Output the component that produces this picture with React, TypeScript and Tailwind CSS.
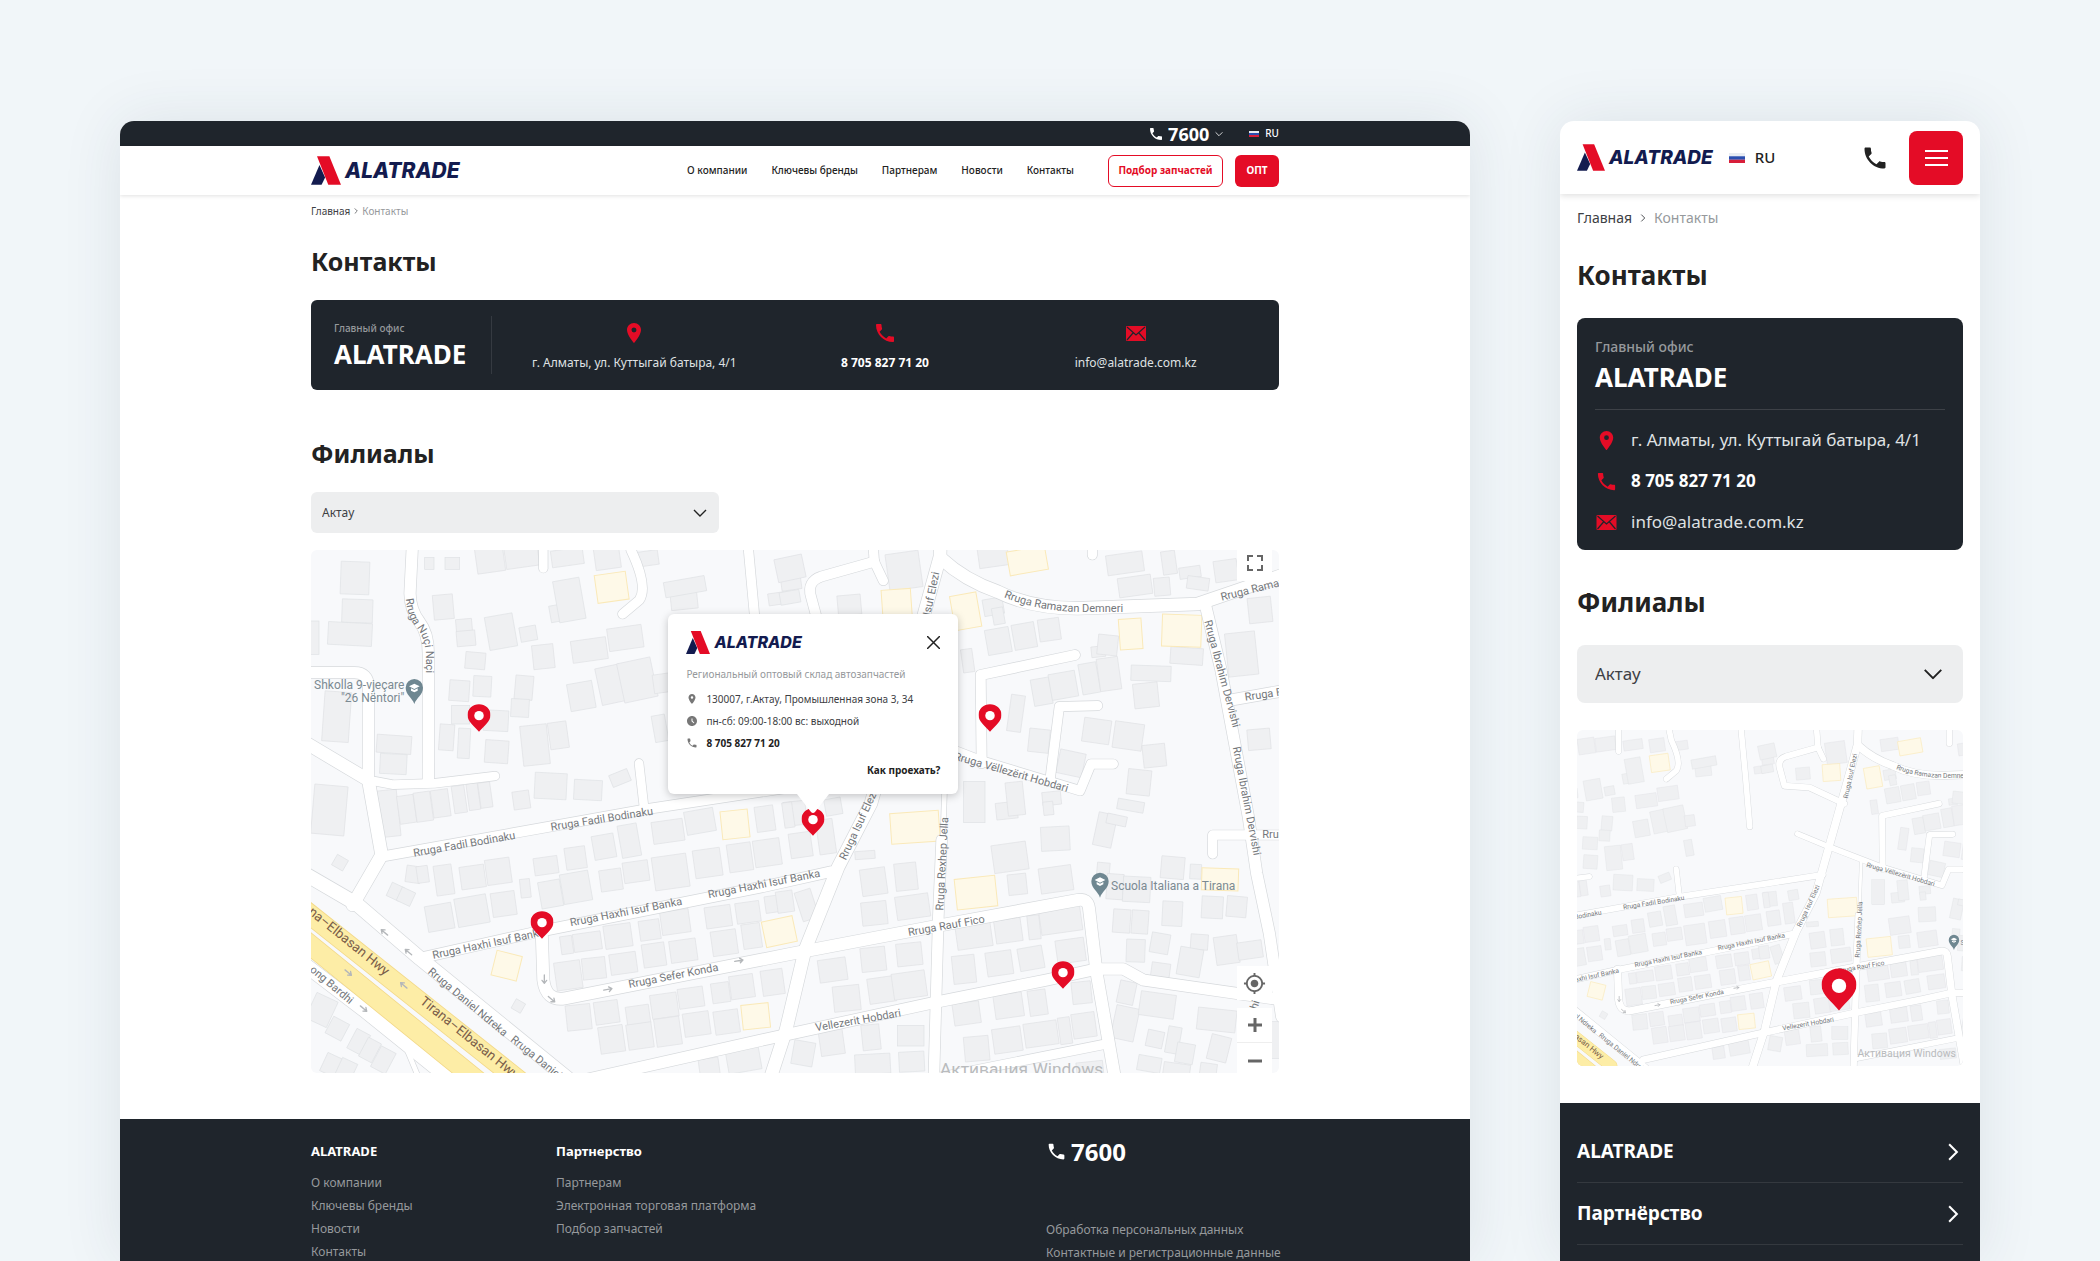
import React, { useId } from 'react';
import { MdAccessTimeFilled, MdGpsFixed, MdLocationOn, MdPhone } from 'react-icons/md';

type Shape = [number, number, number, number, number?];

// Buildings are stored per map tile: center x, center y, width, height, rotation
const TILES: { origin: string; gray: Shape[]; yellow: Shape[] }[] = [
  {
    origin: 'translate(-63 -390)',
    gray: [
      [195, 474, 86, 98, 2], [202, 573, 92, 70, 2], [180, 642, 132, 68, 3], [72, 653, 30, 100], [140, 890, 80, 150, 4],
      [418, 430, 28, 36], [487, 430, 44, 36], [600, 418, 84, 78, -8], [695, 408, 100, 68, -8], [832, 412, 96, 50, -8],
      [952, 414, 76, 66, -8], [1073, 415, 64, 44, -8], [460, 561, 60, 74, -5], [522, 616, 48, 38, -5], [528, 655, 56, 46, -5],
      [633, 635, 84, 100, -10], [715, 641, 50, 44, -10], [760, 710, 64, 72, -6], [556, 722, 60, 50, 5], [800, 580, 40, 50, -10],
      [838, 540, 80, 125, -10], [1182, 540, 80, 56, -6], [1185, 500, 124, 46, -10], [1500, 465, 60, 90, -8], [1470, 535, 70, 36, -8],
      [898, 690, 106, 66, -8], [1006, 654, 104, 68, -8], [962, 794, 74, 112, -12], [1042, 780, 102, 120, -12], [874, 828, 76, 82, -10],
      [1115, 790, 50, 56, -8], [508, 812, 60, 62, 4], [577, 799, 54, 62, 3], [702, 803, 54, 72, 5], [690, 864, 54, 54, 3],
      [512, 884, 54, 56], [618, 902, 74, 62, 3], [470, 952, 44, 78, 4], [522, 970, 36, 90, 3], [620, 995, 70, 68, 4],
      [735, 975, 80, 120, -6], [805, 946, 56, 80, -8], [312, 973, 104, 54, 4], [1110, 925, 40, 80, -10],
    ],
    yellow: [[965, 502, 94, 84, -8]],
  },
  {
    origin: 'translate(1407 -30)',
    gray: [
      [30, 85, 84, 70, -12], [30, 172, 60, 38, -10], [208, 195, 70, 60, -5], [372, 92, 100, 110, -8], [640, 50, 90, 60, -8],
      [640, 200, 60, 50, -10], [655, 228, 34, 50, -10], [1035, 70, 110, 60, -8], [1167, 68, 42, 70, -8], [1230, 97, 64, 34, -8],
      [1254, 130, 66, 38, 8], [1065, 138, 100, 58, -8], [1146, 140, 48, 54, -5], [1338, 92, 70, 64, -8], [1440, 210, 70, 76, -6],
      [1385, 342, 90, 130, -6], [655, 303, 72, 76, -10], [733, 288, 68, 76, -10], [808, 269, 64, 66, -8], [563, 362, 34, 70, -8],
      [955, 335, 42, 32, -6], [983, 315, 60, 60, 6], [1220, 348, 98, 50, 4], [1113, 400, 120, 46, 2], [1098, 466, 74, 74, -6],
      [785, 455, 56, 80, -10], [850, 436, 80, 78, -10], [928, 415, 54, 92, -10], [987, 402, 64, 98, -8], [708, 520, 42, 110, 8],
      [777, 602, 62, 70, 6], [873, 670, 78, 72, 12], [950, 573, 82, 72, 8], [1045, 588, 88, 80, 8], [1123, 647, 68, 68, -6],
      [1077, 727, 70, 76, 6], [1052, 797, 80, 32, 10], [583, 786, 64, 124], [680, 812, 64, 50, -6], [706, 776, 52, 100, -6],
      [815, 775, 56, 40, -6], [805, 805, 30, 40, -6], [826, 896, 86, 72, -3], [975, 870, 56, 100, 12], [1010, 840, 60, 30, 12],
      [1437, 598, 68, 62, -5], [62, 915, 66, 74, -8], [138, 890, 50, 104, -8], [45, 820, 66, 72, -6], [160, 800, 50, 50, -10],
      [255, 945, 60, 24, -4],
    ],
    yellow: [
      [350, 190, 88, 84, -4], [742, 62, 116, 72, -10], [557, 214, 80, 104, -10], [1052, 282, 68, 92, -4],
      [1205, 272, 118, 96, 2], [405, 862, 146, 92, -4],
    ],
  },
  {
    origin: 'translate(-63 570)',
    gray: [
      [118, 210, 100, 148, 5], [150, 368, 38, 36, 30], [310, 72, 80, 60, 3], [297, 220, 58, 140, -6], [350, 208, 50, 84, -8],
      [400, 200, 50, 88, -8], [452, 190, 52, 82, -8], [508, 178, 38, 82, -8], [550, 170, 34, 80, -8], [586, 165, 36, 76, -8],
      [694, 180, 50, 54, -8], [782, 138, 96, 78, 3], [894, 150, 84, 60, 3], [990, 114, 58, 38, -22], [370, 403, 44, 50, 8],
      [398, 403, 34, 50, -8], [462, 420, 54, 90, -8], [548, 411, 74, 68, -8], [625, 394, 74, 76, -8], [316, 455, 40, 44, 25],
      [348, 470, 44, 44, 25], [449, 532, 80, 78, -10], [546, 512, 96, 86, -10], [641, 492, 72, 72, -8], [706, 445, 30, 56, -6],
      [768, 377, 72, 52, -8], [857, 354, 62, 66, -8], [942, 320, 66, 72, -10], [1018, 302, 58, 98, -10], [782, 462, 66, 80, -10],
      [858, 442, 86, 90, -10], [963, 420, 66, 64, -8], [1038, 395, 76, 62, -8], [1134, 274, 94, 66, -8], [1230, 244, 88, 70, -10],
      [1425, 236, 56, 76, -8], [1495, 225, 30, 76, -8], [1142, 396, 104, 100, -8], [1253, 369, 82, 84, -8], [1350, 352, 72, 84, -8],
      [1432, 338, 80, 80, -8], [830, 615, 36, 54, -8], [892, 605, 84, 54, -8], [984, 588, 82, 70, -8], [1079, 570, 62, 60, -8],
      [1156, 546, 86, 70, -8], [1285, 530, 78, 64, -8], [1374, 517, 72, 62, -8], [1465, 490, 80, 50, -8], [835, 706, 78, 84, -8],
      [912, 685, 70, 64, -6], [1000, 670, 80, 62, -8], [1092, 645, 68, 70, -8], [1180, 632, 80, 66, -8], [1303, 608, 76, 74, -8],
      [1385, 588, 56, 74, -8], [685, 798, 32, 32, 30], [866, 832, 74, 76, -6], [950, 817, 72, 68, -8], [965, 898, 74, 80, -8],
      [1044, 825, 70, 56, -8], [1050, 888, 76, 76, -8], [1123, 797, 80, 72, -8], [1134, 875, 76, 84, -8], [1203, 773, 76, 60, -8],
      [1220, 852, 78, 70, -8], [1292, 758, 54, 60, -8], [1356, 740, 72, 70, -8], [1310, 846, 74, 70, -8], [1448, 727, 66, 76, -8],
      [95, 810, 70, 84, 25], [142, 866, 54, 56, 28], [206, 905, 46, 66, 28], [240, 930, 44, 64, 28], [280, 960, 50, 70, 28],
      [124, 975, 50, 60, 25], [168, 990, 50, 60, 25], [1258, 985, 60, 60, -8], [1360, 955, 100, 80, -10],
    ],
    yellow: [[1335, 253, 82, 84, -6], [1468, 575, 94, 78, -12], [650, 677, 78, 76, 14], [1397, 829, 82, 74, -6]],
  },
  {
    origin: 'translate(1407 870)',
    gray: [
      [15, 185, 50, 64, -8], [80, 195, 50, 90, -18], [281, 125, 76, 80, -8], [378, 110, 66, 82, -6], [283, 220, 76, 70, -6],
      [398, 200, 100, 70, -8], [690, 52, 104, 84, -8], [712, 133, 56, 62, -6], [828, 118, 98, 76, -8], [970, 88, 38, 40, 5],
      [1005, 140, 50, 76, 4], [1070, 148, 82, 76, 3], [1178, 83, 70, 66, 5], [1247, 95, 34, 44, 3], [1297, 202, 64, 66, 3],
      [1370, 200, 60, 62, 5], [1025, 243, 52, 70, 4], [1080, 246, 50, 70, 4], [1177, 221, 60, 74, 3], [1067, 332, 56, 68, 2],
      [1140, 310, 56, 60, 10], [1258, 306, 52, 46, 4], [1230, 366, 70, 84, 10], [1340, 330, 70, 84, -8], [1410, 330, 74, 52, -8],
      [1142, 390, 56, 42, 8], [582, 288, 106, 72, -8], [685, 272, 80, 70, -8], [762, 262, 36, 72, -6], [842, 240, 124, 76, -8],
      [552, 388, 68, 84, -6], [658, 370, 78, 72, -8], [753, 355, 74, 68, -10], [872, 332, 86, 70, -8], [158, 390, 84, 68, -8],
      [280, 358, 74, 72, -6], [388, 343, 76, 68, -6], [200, 475, 80, 76, -6], [305, 450, 80, 76, -8], [388, 435, 100, 78, -8],
      [560, 520, 80, 66, -8], [686, 497, 86, 72, -8], [773, 488, 54, 76, -8], [905, 458, 58, 66, -6], [590, 626, 74, 74, -5],
      [682, 600, 86, 74, -8], [783, 582, 100, 72, -8], [855, 572, 36, 80, -8], [912, 556, 70, 74, -8], [155, 605, 72, 80, -8],
      [273, 592, 54, 76, -6], [392, 587, 80, 62], [70, 640, 64, 72, 10], [278, 672, 106, 60, -3], [395, 665, 76, 60, -3],
      [1040, 458, 50, 68, 12], [1035, 550, 70, 100, 12], [1132, 495, 106, 72, 8], [1310, 540, 116, 66, 6], [1125, 597, 50, 50, 12],
      [1180, 600, 40, 80, 10], [1215, 640, 54, 60, 10], [1317, 625, 60, 76, 14], [1108, 672, 70, 46, 10], [1190, 690, 80, 40, 8],
      [1285, 690, 50, 40, 8], [930, 690, 80, 50, -6], [1487, 600, 30, 110],
    ],
    yellow: [[588, 158, 122, 92, -6], [1320, 118, 110, 66, 2]],
  },
];

const ROADS: [string, number][] = [
  ['M307 -70 L297 130 Q298 180 325 215 Q352 250 352 310 V690', 34],
  ['M-30 368 H130 Q172 368 172 410 V690', 34],
  ['M-30 570 L172 690 L212 915 L125 1065', 38],
  ['M172 690 L247 704 L370 700 L552 678', 26],
  ['M212 920 L1017 776 L1437 712 L1714 669', 30],
  ['M984 640 L1000 780', 26],
  ['M-30 965 L137 1062 L327 1225 L800 1610 L860 1660', 42],
  ['M-30 1235 L157 1378 L420 1590', 42],
  ['M280 1480 L330 1600', 14],
  ['M337 1222 L677 1146 L1357 1010 L1560 965', 32],
  ['M692 1140 L697 1290 Q705 1355 762 1345 L1437 1212 L1877 1128 L2300 1050 Q2330 1044 2334 1075 L2357 1270 L2425 1660', 36],
  ['M820 1590 L1367 1467 L1867 1358 L2207 1290 L2357 1257 H2437 L2497 1290 L2930 1352', 34],
  ['M1890 -70 L1887 20 L1840 190 L1680 760 L1582 950 L1482 1200 L1425 1440 L1360 1640', 38],
  ['M1890 25 Q1960 90 2060 125 Q2160 175 2300 175 L2660 162 L2930 70', 38],
  ['M2682 160 L2730 360 L2812 800 L2837 970 L2875 1150 L2912 1400', 34],
  ['M2760 450 L2930 420', 34],
  ['M2705 912 V855 H2930', 28],
  ['M1905 600 L1895 880', 14],
  ['M1892 870 L1882 1100 L1867 1640', 32],
  ['M2012 640 L2009 375 L2292 315', 30],
  ['M2217 690 L2245 470 L2360 467', 28],
  ['M1588 465 L1745 530', 26],
  ['M1745 530 L2010 632 L2307 722 L2340 642 H2407', 28],
  ['M1690 35 L1530 80 Q1487 95 1500 140 L1523 226 L1648 235 L1821 315', 30],
  ['M1682 -70 L1690 35 L1717 92', 28],
  ['M1306 -70 L1330 190 L1350 430', 28],
  ['M945 -70 L960 0 Q1012 110 985 150 L935 192', 28],
  ['M697 -70 V55', 26],
  ['M2344 -70 V15', 28],
  ['M1870 1585 L2395 1480', 28],
];

const HIGHWAYS = ['M-40 1064 L660 1620', 'M-40 1154 L620 1690'];

const STREETS: { text: string; at: [number, number]; turn: number; end?: boolean }[] = [
  { text: 'Rruga Fadil Bodinaku', at: [309, 920], turn: -10 },
  { text: 'Rruga Fadil Bodinaku', at: [721, 842], turn: -9 },
  { text: 'Rruga Haxhi Isuf Banka', at: [367, 1227], turn: -12 },
  { text: 'Rruga Haxhi Isuf Banka', at: [779, 1129], turn: -11 },
  { text: 'Rruga Haxhi Isuf Banka', at: [1193, 1045], turn: -11 },
  { text: 'Rruga Sefer Konda', at: [955, 1314], turn: -11 },
  { text: 'Rruga Daniel Ndreka', at: [349, 1268], turn: 40 },
  { text: 'Rruga Daniel Ndreka', at: [597, 1472], turn: 39 },
  { text: 'ong Bardhi', at: [-5, 1262], turn: 40 },
  { text: 'Rruga Isuf Elezi', at: [1838, 290], turn: -78 },
  { text: 'Rruga Isuf Elezi', at: [1604, 932], turn: -65 },
  { text: 'Rruga Rexhep Jella', at: [1897, 1082], turn: -87 },
  { text: 'Rruga Rauf Fico', at: [1793, 1158], turn: -10 },
  { text: 'Vellezerit Hobdari', at: [1515, 1444], turn: -10 },
  { text: 'Rruga Vëllezërit Hobdari', at: [2268, 726], turn: 16, end: true },
  { text: 'Rruga Ramazan', at: [2732, 152], turn: -14 },
  { text: 'Rruga Ibrahim Dervishi', at: [2680, 214], turn: 75 },
  { text: 'Rruga Ibrahim Dervishi', at: [2765, 592], turn: 79 },
  { text: 'Rruga Fico', at: [2803, 452], turn: -8 },
  { text: 'Rruga', at: [2854, 865], turn: 0 },
  { text: 'hi', at: [2838, 1380], turn: -72 },
];

const ARROWS: [number, number, number][] = [
  [220, 1147, 220], [292, 1206, 220], [112, 1268, 40], [278, 1306, 220], [158, 1376, 40],
  [700, 1288, 90], [722, 1348, 40], [891, 1318, -10], [1284, 1232, -10],
];

const school = 'M0 49 C-6 30 -26 22 -26 0 A26 26 0 1 1 26 0 C26 22 6 30 0 49 Z';

const StreetMap: React.FC<{ viewBox: string; className: string }> = ({ viewBox, className }) => {
  const id = useId();
  return (
    <svg viewBox={viewBox} preserveAspectRatio="xMidYMid slice" className={className} aria-hidden="true">
      <rect x="-60" y="-100" width="3060" height="1800" fill="#f8f9fb" />
      {TILES.map((tile) => (
        <g key={tile.origin} transform={tile.origin} strokeWidth="2">
          {tile.gray.map(([x, y, w, h, r = 0], i) => (
            <rect key={i} x={x - w / 2} y={y - h / 2} width={w} height={h} transform={`rotate(${r} ${x} ${y})`} fill="#eff0f2" stroke="#dfe1e4" />
          ))}
          {tile.yellow.map(([x, y, w, h, r = 0], i) => (
            <rect key={i} x={x - w / 2} y={y - h / 2} width={w} height={h} transform={`rotate(${r} ${x} ${y})`} fill="#fef9e8" stroke="#fae9b8" strokeWidth="3" />
          ))}
        </g>
      ))}

      <g fill="none" strokeLinecap="round" strokeLinejoin="round">
        {ROADS.map(([d, w]) => (
          <path key={d} d={d} stroke="#d6d9dc" strokeWidth={w + 4} />
        ))}
        {ROADS.map(([d, w]) => (
          <path key={d} d={d} stroke="#ffffff" strokeWidth={w} />
        ))}
        {HIGHWAYS.map((d) => (
          <path key={d} d={d} stroke="#f3d98a" strokeWidth="62" />
        ))}
        {HIGHWAYS.map((d) => (
          <path key={d} d={d} stroke="#fdeda6" strokeWidth="57" />
        ))}
        {ARROWS.map(([x, y, r]) => (
          <path key={x} d="M-13 0 H12 M3 -7 L12 0 L3 7" transform={`translate(${x} ${y}) rotate(${r})`} stroke="#b4b7ba" strokeWidth="4" />
        ))}
      </g>

      <g fill="#74777b" fontSize="33" fontFamily="Roboto, sans-serif">
        {STREETS.map(({ text, at: [x, y], turn, end }) => (
          <text key={`${x}-${y}`} transform={`translate(${x} ${y}) rotate(${turn})`} textAnchor={end ? 'end' : 'start'}>
            {text}
          </text>
        ))}
        <path id={`${id}-naci`} d="M284 146 Q290 205 318 235 Q342 265 344 310 V520" fill="none" />
        <text>
          <textPath href={`#${id}-naci`}>Rruga Nuçi Naçi</textPath>
        </text>
        <path id={`${id}-demneri`} d="M2078 142 Q2190 186 2320 186 H2600" fill="none" />
        <text>
          <textPath href={`#${id}-demneri`}>Rruga Ramazan Demneri</textPath>
        </text>
        <g fontSize="40" fill="#7a5d49">
          <text transform="translate(222 1278) rotate(39)" textAnchor="end">Tirana–Elbasan Hwy</text>
          <text transform="translate(325 1358) rotate(39)">Tirana–Elbasan Hwy</text>
        </g>
        <g fontSize="36" fill="#7b8a92">
          <text x="280" y="418" textAnchor="end">Shkolla 9-vjeçare</text>
          <text x="280" y="455" textAnchor="end">"26 Nëntori"</text>
          <text x="2400" y="1019">Scuola Italiana a Tirana</text>
        </g>
        <text x="1887" y="1575" fontSize="52" fill="#b9bbbd">Активация Windows</text>
      </g>

      {['translate(310 413)', 'translate(2367 994)'].map((place) => (
        <g key={place} transform={place}>
          <path d={school} fill="#6f8791" />
          <path d="M-16 -4 L0 -12 L16 -4 L0 4 Z M-10 2 V9 L0 14 L10 9 V2 L0 7 Z" fill="#fff" />
        </g>
      ))}
    </svg>
  );
};

const Logo: React.FC<{ mark: string; word: string }> = ({ mark, word }) => (
  <a href="#home" className="flex items-center gap-1">
    <svg viewBox="0 0 85 81" className={mark} aria-hidden="true">
      <path d="M0 81 L24 25 L40 60 L30 81 Z" fill="#131b4f" />
      <path d="M17 0 H52 L85 81 H49 Z" fill="#e40c26" />
    </svg>
    <span className={`font-[Inter,sans-serif] leading-none font-extrabold italic text-[#131b4f] ${word}`}>ALATRADE</span>
  </a>
);

const Flag: React.FC<{ className: string }> = ({ className }) => (
  <svg viewBox="0 0 15 9" preserveAspectRatio="none" className={className} aria-hidden="true">
    <path d="M0 0 H15 V3 H0 Z" fill="#e8ecf3" />
    <path d="M0 3 H15 V6 H0 Z" fill="#2a4fb0" />
    <path d="M0 6 H15 V9 H0 Z" fill="#d81e3a" />
  </svg>
);

const ChevronDown: React.FC<{ className: string }> = ({ className }) => (
  <svg viewBox="0 0 14 8" fill="none" stroke="currentColor" strokeWidth="1.4" className={className} aria-hidden="true">
    <path d="M1 1 L7 7 L13 1" />
  </svg>
);

const ChevronRight: React.FC<{ className: string }> = ({ className }) => (
  <svg viewBox="0 0 8 14" fill="none" stroke="currentColor" strokeWidth="1.6" className={className} aria-hidden="true">
    <path d="M1 1 L7 7 L1 13" />
  </svg>
);

const Mail: React.FC<{ className: string }> = ({ className }) => (
  <svg viewBox="0 0 20 15" className={className} aria-hidden="true">
    <rect width="20" height="15" rx="1" fill="#e40c26" />
    <path d="M1 1 L10 9 L19 1 M1 14 L7 7 M19 14 L13 7" fill="none" stroke="#1f252c" strokeWidth="1.2" />
  </svg>
);

const Pin: React.FC<{ className: string }> = ({ className }) => (
  <svg viewBox="0 0 68 82" className={className} aria-hidden="true">
    <path d="M34 82 C20 64 0 52 0 32 A34 32 0 0 1 68 32 C68 52 48 64 34 82 Z" fill="#e40c26" />
    <circle cx="34" cy="34" r="14" fill="#fff" />
  </svg>
);

const CitySelect: React.FC<{ id: string; box: string; chevron: string }> = ({ id, box, chevron }) => (
  <div className="relative">
    <label htmlFor={id} className="sr-only">Филиал</label>
    <select id={id} defaultValue="Актау" className={`w-full appearance-none bg-[#edeeef] text-[#3d4044] ${box}`}>
      <option>Актау</option>
      <option>Алматы</option>
    </select>
    <ChevronDown className={`pointer-events-none absolute top-1/2 -translate-y-1/2 text-[#222] ${chevron}`} />
  </div>
);

const NAV = ['О компании', 'Ключевы бренды', 'Партнерам', 'Новости', 'Контакты'];

const PINS = [
  { name: 'Филиал 1', place: 'left-[17.4%] top-[34.8%]' },
  { name: 'Филиал 2', place: 'left-[70.1%] top-[34.8%]' },
  { name: 'Актау', place: 'left-[51.9%] top-[54.7%]' },
  { name: 'Филиал 4', place: 'left-[23.9%] top-[74.3%]' },
  { name: 'Филиал 5', place: 'left-[77.7%] top-[83.9%]' },
];

const BranchPopup: React.FC = () => (
  <div className="absolute top-[12.2%] left-[51.9%] w-[290px] -translate-x-1/2">
    <div className="flex h-[180px] flex-col rounded-md bg-white px-[18px] pt-[17px] shadow-[0_2px_8px_rgba(0,0,0,0.22)]">
      <div className="flex items-center justify-between">
        <Logo mark="h-[23px] w-6" word="text-base" />
        <button type="button" aria-label="Закрыть" className="text-[#222]">
          <svg viewBox="0 0 13 13" className="size-[13px]" stroke="currentColor" strokeWidth="1.5">
            <path d="M0 0 L13 13 M13 0 L0 13" />
          </svg>
        </button>
      </div>
      <p className="mt-3 text-[10px] leading-4 text-[#96999c]">Региональный оптовый склад автозапчастей</p>
      <ul className="mt-1.5 text-[10px] leading-[22px] text-[#3d4044]">
        <li className="flex items-center gap-2"><MdLocationOn className="size-3 text-[#777]" />130007, г.Актау, Промышленная зона 3, 34</li>
        <li className="flex items-center gap-2"><MdAccessTimeFilled className="size-3 text-[#777]" />пн-сб: 09:00-18:00 вс: выходной</li>
        <li className="flex items-center gap-2 font-bold text-[#222]"><MdPhone className="size-3 text-[#777]" />8 705 827 71 20</li>
      </ul>
      <a href="#route" className="mt-2 self-end text-[10px] leading-4 font-bold text-[#222]">Как проехать?</a>
    </div>
    <svg viewBox="0 0 32 20" className="mx-auto h-5 w-8" aria-hidden="true">
      <path d="M0 0 H32 L18 18 Q16 20 14 18 Z" fill="#fff" />
    </svg>
  </div>
);

const DesktopSite: React.FC = () => (
  <div className="flex min-w-0 flex-1 flex-col overflow-hidden rounded-t-[14px] bg-white shadow-[0_0_60px_rgba(40,60,80,0.1)]">
    <div className="bg-[#1f252c] text-white">
      <div className="mx-auto flex h-[25px] w-full max-w-[968px] items-center justify-end">
        <a href="tel:7600" className="flex items-center gap-1 text-lg leading-none font-bold"><MdPhone className="size-4" />7600</a>
        <ChevronDown className="ml-1.5 h-1.5 w-2" />
        <button type="button" className="ml-[26px] flex items-center gap-1.5 text-[10px] font-medium"><Flag className="h-1.5 w-2.5" />RU</button>
      </div>
    </div>
    <header className="relative shadow-[0_1px_4px_rgba(0,0,0,0.12)]">
      <div className="mx-auto flex h-[49px] w-full max-w-[968px] items-center">
        <Logo mark="h-[29px] w-[30px]" word="text-[21px]" />
        <nav className="ml-auto flex gap-6 text-[10px] font-medium text-[#222]">
          {NAV.map((item) => <a key={item} href="#nav">{item}</a>)}
        </nav>
        <button type="button" className="ml-[34px] h-8 w-[115px] rounded-md border border-[#e40c26] text-[10px] font-bold text-[#e40c26]">Подбор запчастей</button>
        <button type="button" className="ml-3 h-8 w-11 rounded-md bg-[#e40c26] text-[10px] font-bold text-white">ОПТ</button>
      </div>
    </header>
    <main className="mx-auto w-full max-w-[968px] pt-2">
      <div className="flex items-center gap-1 text-[10px] leading-4 text-[#3d4044]">
        <a href="#home">Главная</a>
        <ChevronRight className="h-1.5 w-1" />
        <span className="text-[#96999c]">Контакты</span>
      </div>
      <h1 className="mt-6 text-[25px] leading-9 font-bold text-[#222]">Контакты</h1>
      <section className="mt-[21px] flex h-[90px] items-center rounded-md bg-[#1f252c] pr-[18px] pl-[23px] text-white">
        <div className="flex h-[58px] w-[158px] flex-col justify-center border-r border-[#353a41]">
          <p className="text-[10px] leading-4 font-medium text-[#96999c]">Главный офис</p>
          <p className="mt-0.5 text-[26px] leading-8 font-bold">ALATRADE</p>
        </div>
        <address className="ml-[17px] grid flex-1 grid-cols-3 pt-0.5 text-xs leading-4 text-[#dfe1e3] not-italic">
          <p className="flex flex-col items-center gap-2.5"><MdLocationOn className="size-6 text-[#e40c26]" />г. Алматы, ул. Куттыгай батыра, 4/1</p>
          <a href="tel:87058277120" className="flex flex-col items-center gap-2.5 font-bold text-white"><MdPhone className="size-6 text-[#e40c26]" />8 705 827 71 20</a>
          <a href="mailto:info@alatrade.com.kz" className="flex flex-col items-center gap-2.5"><span className="flex h-6 items-center"><Mail className="h-[15px] w-5" /></span>info@alatrade.com.kz</a>
        </address>
      </section>
      <h2 className="mt-[45px] text-[25px] leading-9 font-bold text-[#222]">Филиалы</h2>
      <div className="mt-[21px] max-w-[408px]">
        <CitySelect id="city-desktop" box="h-[41px] rounded-md px-[11px] text-xs" chevron="right-3 h-2 w-3.5" />
      </div>
      <div className="relative mt-[17px] overflow-hidden rounded-md">
        <StreetMap viewBox="0 0 2904 1569" className="block aspect-[968/523] w-full" />
        {PINS.map(({ name, place }) => (
          <button key={name} type="button" aria-label={name} className={`absolute -translate-x-1/2 -translate-y-full ${place}`}>
            <Pin className="block h-7 w-[23px]" />
          </button>
        ))}
        <BranchPopup />
        <div className="pointer-events-none absolute inset-y-0 right-[7px] flex w-[35px] flex-col text-[#666]">
          <button type="button" aria-label="На весь экран" className="pointer-events-auto flex h-[31px] items-center justify-center bg-white pb-1.5">
            <svg viewBox="0 0 16 16" className="size-4" fill="none" stroke="currentColor" strokeWidth="2">
              <path d="M1 6 V1 H6 M10 1 H15 V6 M15 10 V15 H10 M6 15 H1 V10" />
            </svg>
          </button>
          <button type="button" aria-label="Моё местоположение" className="pointer-events-auto mt-auto mb-2 flex h-[34px] items-center justify-center bg-white"><MdGpsFixed className="size-[23px]" /></button>
          <button type="button" aria-label="Приблизить" className="pointer-events-auto flex h-[35px] items-center justify-center border-b border-[#eee] bg-white">
            <svg viewBox="0 0 16 16" className="size-4" stroke="currentColor" strokeWidth="3">
              <path d="M1 8 H15 M8 1 V15" />
            </svg>
          </button>
          <button type="button" aria-label="Отдалить" className="pointer-events-auto flex h-[30px] items-center justify-center bg-white pt-1.5">
            <svg viewBox="0 0 16 16" className="size-4" stroke="currentColor" strokeWidth="3">
              <path d="M1 8 H15" />
            </svg>
          </button>
        </div>
      </div>
    </main>
    <footer className="mt-[46px] flex-1 bg-[#1f252c] pt-[22px] text-xs leading-[23px] text-[#96999c]">
      <div className="mx-auto grid w-full max-w-[968px] grid-cols-[245px_490px_1fr]">
        <nav className="flex flex-col">
          <p className="mb-2.5 text-[13px] leading-5 font-bold text-white">ALATRADE</p>
          <a href="#about">О компании</a>
          <a href="#brands">Ключевы бренды</a>
          <a href="#news">Новости</a>
          <a href="#contacts">Контакты</a>
        </nav>
        <nav className="flex flex-col">
          <p className="mb-2.5 text-[13px] leading-5 font-bold text-white">Партнерство</p>
          <a href="#partners">Партнерам</a>
          <a href="#platform">Электронная торговая платформа</a>
          <a href="#parts">Подбор запчастей</a>
        </nav>
        <nav className="flex flex-col whitespace-nowrap">
          <a href="tel:7600" className="mb-14 flex items-center gap-1 text-2xl leading-5 font-bold text-white"><MdPhone className="size-[21px]" />7600</a>
          <a href="#privacy">Обработка персональных данных</a>
          <a href="#legal">Контактные и регистрационные данные</a>
        </nav>
      </div>
    </footer>
  </div>
);

const MobileSite: React.FC = () => (
  <div className="flex w-[420px] shrink-0 flex-col overflow-hidden rounded-t-[14px] bg-white shadow-[0_0_60px_rgba(40,60,80,0.1)]">
    <header className="flex h-[73px] items-center px-[17px] shadow-[0_2px_6px_rgba(0,0,0,0.12)]">
      <Logo mark="h-[27px] w-[28px]" word="text-[19px]" />
      <button type="button" className="ml-4 flex items-center gap-2.5 text-[15px] font-medium text-[#222]"><Flag className="h-2.5 w-4" />RU</button>
      <a href="tel:7600" aria-label="Позвонить" className="ml-auto text-[#222]"><MdPhone className="size-7" /></a>
      <button type="button" aria-label="Меню" className="ml-5 flex size-[54px] flex-col items-center justify-center gap-[5px] rounded-lg bg-[#e40c26]">
        <span className="h-0.5 w-[23px] bg-white" />
        <span className="h-0.5 w-[23px] bg-white" />
        <span className="h-0.5 w-[23px] bg-white" />
      </button>
    </header>
    <main className="px-[17px] pt-3.5">
      <div className="flex items-center gap-2 text-sm leading-5 text-[#3d4044]">
        <a href="#home">Главная</a>
        <ChevronRight className="h-2 w-1.5" />
        <span className="text-[#96999c]">Контакты</span>
      </div>
      <h1 className="mt-[29px] text-[26px] leading-9 font-bold text-[#222]">Контакты</h1>
      <section className="mt-[25px] rounded-lg bg-[#1f252c] px-[18px] pt-[19px] pb-4 text-white">
        <p className="text-sm leading-5 font-medium text-[#96999c]">Главный офис</p>
        <p className="mt-1 text-[26px] leading-8 font-bold">ALATRADE</p>
        <address className="mt-4 flex flex-col gap-[17px] border-t border-[#3d4147] pt-[18px] text-[17px] leading-6 text-[#dfe1e3] not-italic">
          <p className="flex items-center gap-[13px] whitespace-nowrap"><MdLocationOn className="size-[23px] shrink-0 text-[#e40c26]" />г. Алматы, ул. Куттыгай батыра, 4/1</p>
          <a href="tel:87058277120" className="flex items-center gap-[13px] font-bold text-white"><MdPhone className="size-[23px] text-[#e40c26]" />8 705 827 71 20</a>
          <a href="mailto:info@alatrade.com.kz" className="flex items-center gap-[13px]"><Mail className="h-[15px] w-[23px]" />info@alatrade.com.kz</a>
        </address>
      </section>
      <h2 className="mt-[34px] text-[26px] leading-9 font-bold text-[#222]">Филиалы</h2>
      <div className="mt-[25px]">
        <CitySelect id="city-mobile" box="h-[58px] rounded-lg px-[18px] text-[17px]" chevron="right-5 h-[11px] w-5" />
      </div>
      <div className="relative mt-[27px] overflow-hidden rounded-md">
        <StreetMap viewBox="490 -52 1922 1674" className="block aspect-[387/337] w-full" />
        <button type="button" aria-label="Актау" className="absolute top-[83.5%] left-[67.8%] -translate-x-1/2 -translate-y-full">
          <Pin className="block h-[43px] w-[35px]" />
        </button>
      </div>
    </main>
    <footer className="mt-[37px] flex-1 bg-[#1f252c] px-[17px] pt-[18px]">
      {['ALATRADE', 'Партнёрство'].map((title) => (
        <button key={title} type="button" className="flex h-[62px] w-full items-center justify-between border-b border-[#34393f] pr-1 text-[19px] font-bold text-white">
          {title}
          <ChevronRight className="h-[18px] w-3" />
        </button>
      ))}
    </footer>
  </div>
);

const App: React.FC = () => {
  return (
    <div className="flex h-screen gap-[90px] overflow-hidden bg-[#f1f6f9] px-[120px] pt-[121px] font-['Noto_Sans',sans-serif]">
      <DesktopSite />
      <MobileSite />
    </div>
  );
};

export default App;
